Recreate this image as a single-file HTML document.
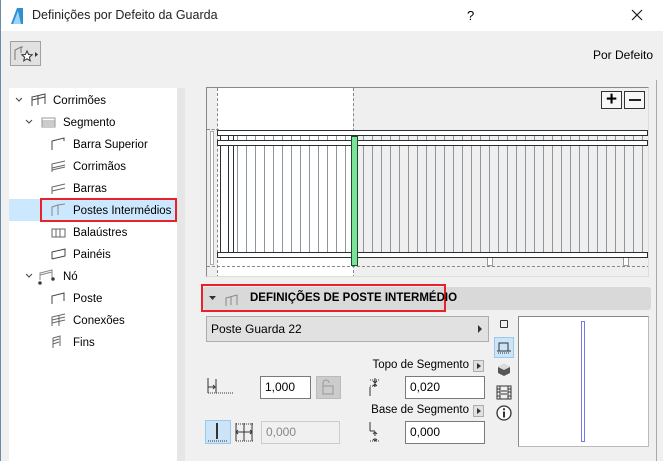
<!DOCTYPE html>
<html><head><meta charset="utf-8"><style>
*{margin:0;padding:0;box-sizing:border-box}
body{width:663px;height:461px;overflow:hidden;background:#f0f0f0;font-family:"Liberation Sans",sans-serif;font-size:12px;color:#000;position:relative}
.a{position:absolute}
.title{left:0;top:0;width:663px;height:31px;background:#fff;border-left:1px solid #6b8bab}
.tree .r{position:absolute;height:22px;line-height:24px;white-space:nowrap;font-size:11.5px}
.inp{position:absolute;background:#fff;border:1px solid #7a7a7a;height:23px;line-height:21px;padding-left:4px;font-size:12px}
.lines{background:repeating-linear-gradient(90deg,transparent 0 8px,#8e959c 8px 9px)}
.rail{position:absolute;background:#fff;border:1px solid #2b2f33}
</style></head><body>
<div class="a title">
  <svg class="a" style="left:9px;top:7px" width="14" height="18"><path d="M1 17 L7 1 L13 1 L13 17 Z" fill="#2d8fd6"/><path d="M3 17 L8 4 L11 17Z" fill="#9fd3f5"/></svg>
  <div class="a" style="left:31px;top:8px;font-size:12.5px;color:#222">Definições por Defeito da Guarda</div>
  <div class="a" style="left:466px;top:8px;font-size:13px">?</div>
  <svg class="a" style="left:630px;top:9px" width="12" height="12"><path d="M1 1L11 11M11 1L1 11" stroke="#222" stroke-width="1.2"/></svg>
</div>
<div class="a" style="left:0;top:31px;width:1px;height:430px;background:#6b8bab"></div>
<div class="a" style="left:10px;top:41px;width:31px;height:25px;background:#e1e1e1;border:1px solid #a0a0a0">
  <svg width="31" height="25"><path d="M4 18V8L10 5V11M10 5h2" stroke="#777" fill="none"/><path d="M16 9l1.6 3.5 3.6.3-2.8 2.4.9 3.6-3.3-2-3.3 2 .9-3.6-2.8-2.4 3.6-.3z" fill="#fff" stroke="#333"/><path d="M24 10l3 2.5-3 2.5z" fill="#333"/></svg>
</div>
<div class="a" style="right:10px;top:48px;font-size:12px">Por Defeito</div>

<!-- tree -->
<div class="a tree" style="left:9px;top:88px;width:168px;height:373px;background:#fff">
  <div class="a" style="left:0;top:111px;width:168px;height:22px;background:#cce8ff"></div>
  <div class="a" style="left:31px;top:110px;width:137px;height:24px;border:2px solid #e8212a"></div>
  <svg class="a" style="left:0;top:0" width="60" height="270" fill="none" stroke="#444">
    <path d="M7 10l3 3 3-3M17 32l3 3 3-3M17 186l3 3 3-3"/>
    <g transform="translate(22,6)"><path d="M1 12V3l13-3v10M7 11V2M1 6l13-3"/></g>
    <g transform="translate(32,28)" stroke="#999"><path d="M1 11V2h13v9zM1 5h13M1 7h13M1 9h13"/></g>
    <g transform="translate(42,50)"><path d="M1 12V3l12-3v3"/></g>
    <g transform="translate(42,72)" stroke="#666"><path d="M1 12V4l13-3M1 8l13-3M1 10l13-3"/></g>
    <g transform="translate(42,94)" stroke="#666"><path d="M1 12V5l13-3M1 9l13-3"/></g>
    <g transform="translate(42,116)" stroke="#888"><path d="M1 12V3l6-2v10M7 1l7-1"/></g>
    <g transform="translate(42,138)" stroke="#666"><path d="M1 11V3h13v8zM5 3v8M9 3v8"/></g>
    <g transform="translate(42,160)"><path d="M1 11V4l13-3v7l-13 3"/></g>
    <g transform="translate(30,182)" stroke="#888"><path d="M1 10V3l12-3v8M1 5l12-3"/></g>
    <circle cx="31" cy="195" r="1.3" fill="#333"/><circle cx="44" cy="191" r="1.3" fill="#333"/>
    <g transform="translate(42,204)"><path d="M1 12V4l12-3v8"/></g>
    <g transform="translate(42,226)" stroke="#666"><path d="M1 12V3l13-3M1 6l13-3M1 9l13-3M8 2v10"/></g>
    <g transform="translate(42,248)" stroke="#666"><path d="M2 12V2l7-2v10M2 5l6-2M2 8l6-2"/></g>
  </svg>
  <div class="r" style="left:44px;top:1px">Corrimões</div>
  <div class="r" style="left:54px;top:23px">Segmento</div>
  <div class="r" style="left:64px;top:45px">Barra Superior</div>
  <div class="r" style="left:64px;top:67px">Corrimãos</div>
  <div class="r" style="left:64px;top:89px">Barras</div>
  <div class="r" style="left:64px;top:111px">Postes Intermédios</div>
  <div class="r" style="left:64px;top:133px">Balaústres</div>
  <div class="r" style="left:64px;top:155px">Painéis</div>
  <div class="r" style="left:54px;top:177px">Nó</div>
  <div class="r" style="left:64px;top:199px">Poste</div>
  <div class="r" style="left:64px;top:221px">Conexões</div>
  <div class="r" style="left:64px;top:243px">Fins</div>
</div>
<div class="a" style="left:177px;top:88px;width:8px;height:373px;background:#e6e6e6"></div>
<div class="a" style="left:656px;top:80px;width:1px;height:381px;background:#a9a9a9"></div>

<!-- preview -->
<div class="a" style="left:206px;top:87px;width:443px;height:190px;background:#efefef;border-top:1px solid #888;border-left:1px solid #888;border-right:1px solid #ddd;border-bottom:1px solid #ddd;overflow:hidden">
  <div class="a" style="left:10px;top:0;width:136px;height:190px;background:#fff"></div>
  <div class="a" style="left:10px;top:0;height:190px;border-left:1px dashed #888"></div>
  <div class="a" style="left:146px;top:0;height:190px;border-left:1px dashed #888"></div>
  <div class="a" style="left:0;top:41px;width:12px;border-top:1px dashed #888"></div>
  <div class="a" style="left:0;top:178px;width:443px;border-top:1px dashed #888"></div>
  <div class="a lines" style="left:13px;top:47px;width:428px;height:118px"></div>
  <div class="a" style="left:21px;top:47px;width:6px;height:118px;border-left:1px solid #2b2f33;border-right:1px solid #2b2f33"></div>
  <div class="a" style="left:13px;top:47px;width:1px;height:118px;background:#2b2f33"></div>
  <div class="rail" style="left:10px;top:42px;width:431px;height:6px"></div>
  <div class="rail" style="left:10px;top:52px;width:431px;height:6px"></div>
  <div class="a" style="left:280px;top:168px;width:6px;height:10px;background:#fff;border:1px solid #999"></div>
  <div class="a" style="left:416px;top:168px;width:6px;height:10px;background:#fff;border:1px solid #999"></div>
  <div class="rail" style="left:10px;top:164px;width:431px;height:6px"></div>
  <div class="a" style="left:3px;top:43px;width:4px;height:134px;border:1px solid #aaa;background:#fff"></div>
  <div class="a" style="left:144px;top:48px;width:7px;height:130px;background:#7ae39a;border:1px solid #1c4a2b"></div>
  <div class="a" style="left:394px;top:3px;width:21px;height:18px;border:1px solid #333;background:#f7f7f7;font-size:19px;line-height:15px;text-align:center;font-weight:bold">+</div>
  <div class="a" style="left:417px;top:3px;width:21px;height:18px;border:1px solid #333;background:#f7f7f7"><div class="a" style="left:4px;top:7px;width:12px;height:2px;background:#222"></div></div>
</div>

<!-- section header -->
<div class="a" style="left:203px;top:287px;width:448px;height:23px;background:#d9d9d9;border-radius:3px"></div>
<div class="a" style="left:201px;top:284px;width:245px;height:28px;border:2px solid #e8212a"></div>
<svg class="a" style="left:209px;top:292px" width="40" height="16"><path d="M0 4h7l-3.5 4z" fill="#333"/><path d="M17 14V6l11-3v10M22 5v8" stroke="#888" fill="none"/></svg>
<div class="a" style="left:250px;top:292px;font-weight:bold;font-size:11.5px">DEFINIÇÕES DE POSTE INTERMÉDIO</div>

<div class="a" style="left:206px;top:316px;width:283px;height:26px;background:#e1e1e1;border:1px solid #adadad;line-height:24px;padding-left:4px">Poste Guarda 22<div class="a" style="right:6px;top:8px;width:0;height:0;border-left:4px solid #333;border-top:4px solid transparent;border-bottom:4px solid transparent"></div></div>

<!-- icons column -->
<div class="a" style="left:500px;top:320px;width:8px;height:8px;border:1px solid #333;border-radius:1px"></div>
<div class="a" style="left:494px;top:337px;width:20px;height:21px;background:#cce4f7;border:1px solid #99c9ef"></div>
<svg class="a" style="left:496px;top:340px" width="16" height="14"><path d="M3 11V3h9v8M1 11h14" stroke="#333" fill="none"/><path d="M2 13h12" stroke="#333" stroke-dasharray="1 1"/></svg>
<svg class="a" style="left:497px;top:363px" width="14" height="14"><path d="M7 1l6 3v6l-6 3-6-3V4z" fill="#555"/><path d="M7 1l6 3-6 3-6-3z" fill="#ddd"/></svg>
<svg class="a" style="left:496px;top:385px" width="16" height="15"><rect x="1" y="1" width="14" height="13" fill="none" stroke="#333"/><path d="M4 1v13M12 1v13M1 4h3M1 7h3M1 11h3M12 4h3M12 7h3M12 11h3M5 6h6M5 9h6" stroke="#333"/></svg>
<svg class="a" style="left:496px;top:405px" width="16" height="16"><circle cx="8" cy="8" r="7" fill="#fff" stroke="#333" stroke-width="1.3"/><rect x="7" y="6.5" width="2" height="6" fill="#333"/><circle cx="8" cy="4.2" r="1.1" fill="#333"/></svg>

<div class="a" style="left:518px;top:316px;width:131px;height:131px;background:#fff;border:1px solid #bbb;border-top-color:#888;border-left-color:#888"></div>
<div class="a" style="left:581px;top:321px;width:4px;height:121px;border:1px solid #7878e8"></div>

<div class="a" style="right:194px;top:359px;font-size:11.5px">Topo de Segmento</div>
<div class="a" style="left:473px;top:360px;width:11px;height:12px;background:#e1e1e1;border:1px solid #adadad"><div class="a" style="left:3px;top:2px;border-left:4px solid #333;border-top:3.5px solid transparent;border-bottom:3.5px solid transparent"></div></div>
<div class="a" style="right:194px;top:404px;font-size:11.5px">Base de Segmento</div>
<div class="a" style="left:473px;top:405px;width:11px;height:12px;background:#e1e1e1;border:1px solid #adadad"><div class="a" style="left:3px;top:2px;border-left:4px solid #333;border-top:3.5px solid transparent;border-bottom:3.5px solid transparent"></div></div>

<svg class="a" style="left:207px;top:376px" width="28" height="20"><path d="M1 2v15M1 11h7M6 9l2 2-2 2M9 3v14" stroke="#333" fill="none"/><path d="M1 17h26" stroke="#333" stroke-dasharray="1 1"/></svg>
<div class="inp" style="left:260px;top:376px;width:51px">1,000</div>
<div class="a" style="left:316px;top:376px;width:25px;height:23px;background:#ccc;border:1px solid #bbb"><svg width="23" height="21"><path d="M6 9V6a3 3 0 016 0M6 9h10v8H6z" fill="none" stroke="#999"/></svg></div>
<svg class="a" style="left:358px;top:376px" width="24" height="22"><path d="M12 4h10M12 10h5" stroke="#333" stroke-dasharray="1 1"/><path d="M12 11v9M17 2v5M15 5l2 2 2-2M17 11v-3M15 10l2-2 2 2" stroke="#333" fill="none"/></svg>
<div class="inp" style="left:405px;top:376px;width:80px">0,020</div>
<div class="a" style="left:205px;top:420px;width:26px;height:24px;background:#cce4f7;border:1px solid #99c9ef"></div>
<svg class="a" style="left:205px;top:420px" width="60" height="24"><path d="M12 3v16" stroke="#333" stroke-width="2"/><path d="M3 21h20M31 21h17M31 4h17" stroke="#333" stroke-dasharray="1 1"/><path d="M31 3v18M47 3v18M31 12h16M33 10l-2 2 2 2M45 10l2 2-2 2M39 3v18" stroke="#333" fill="none"/></svg>
<div class="inp" style="left:261px;top:421px;width:79px;background:#f0f0f0;border-color:#ccc;color:#888">0,000</div>
<svg class="a" style="left:358px;top:420px" width="24" height="22"><path d="M12 2v9M12 11h5M17 13v3M15 14l2-2 2 2M17 21v-3M15 19l2 2 2-2" stroke="#333" fill="none"/><path d="M12 21h10" stroke="#333" stroke-dasharray="1 1"/></svg>
<div class="inp" style="left:405px;top:421px;width:80px">0,000</div>
</body></html>
